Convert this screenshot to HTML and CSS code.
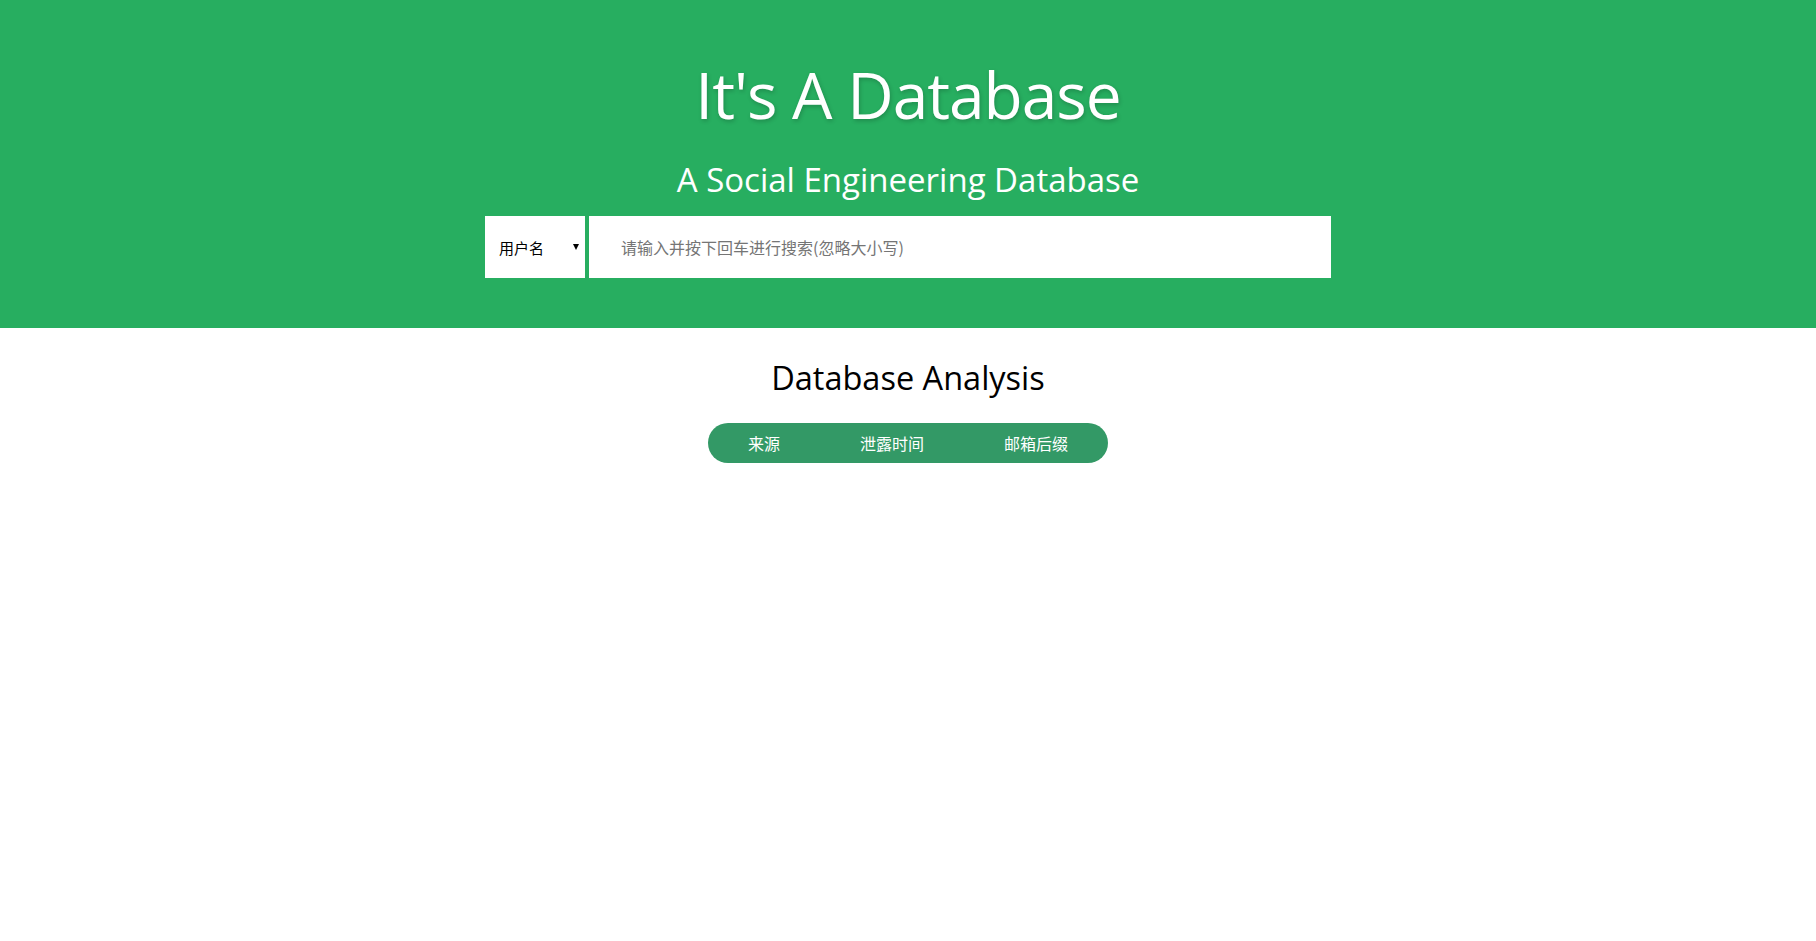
FILE: index.html
```html
<!DOCTYPE html>
<html lang="zh-CN">
<head>
<meta charset="utf-8">
<title>It's A Database</title>
<link rel="stylesheet" href="styles.css">
</head>
<body>
<header class="hero">
  <h1 class="hero-title">It's A Database</h1>
  <h2 class="hero-sub">A Social Engineering Database</h2>
  <form class="search">
    <div class="search-type">
      <span class="search-type-label">用户名</span>
      <span class="search-type-arrow"></span>
    </div>
    <input class="search-input" type="text" placeholder="请输入并按下回车进行搜索(忽略大小写)">
  </form>
</header>
<main class="analysis">
  <h2 class="analysis-title">Database Analysis</h2>
  <ul class="tabs">
    <li class="tab">来源</li>
    <li class="tab">泄露时间</li>
    <li class="tab">邮箱后缀</li>
  </ul>
</main>
</body>
</html>
```

FILE: styles.css
```css
html, body {
  margin: 0;
  padding: 0;
  background: #ffffff;
}
body {
  font-family: "Open Sans", "Noto Sans CJK SC", sans-serif;
}
.hero {
  background: #27ae60;
  height: 328px;
  box-sizing: border-box;
  display: flex;
  flex-direction: column;
  align-items: center;
  padding-top: 53px;
}
.hero-title {
  margin: 0;
  font-weight: 400;
  font-size: 64px;
  letter-spacing: -1px;
  line-height: 84px;
  color: #ffffff;
  text-shadow: 1px 2px 4px rgba(0, 0, 0, 0.2);
}
.hero-sub {
  margin: 18px 0 0;
  font-weight: 400;
  font-size: 33px;
  line-height: 50px;
  color: #ffffff;
}
.search {
  margin-top: 11px;
  display: flex;
  gap: 4px;
  width: 846px;
  height: 62px;
}
.search-type {
  width: 100px;
  background: #ffffff;
  display: flex;
  align-items: center;
  box-sizing: border-box;
  padding: 0 6px 0 14px;
  justify-content: space-between;
}
.search-type-label {
  font-family: "Noto Sans CJK SC", sans-serif;
  font-size: 15px;
  color: #000000;
}
.search-type-arrow {
  width: 0;
  height: 0;
  border-left: 3.5px solid transparent;
  border-right: 3.5px solid transparent;
  border-top: 6px solid #000000;
  margin-top: -1px;
}
.search-input {
  flex: 1;
  border: 0;
  margin: 0;
  outline: none;
  padding: 0 0 0 32px;
  font-family: "Noto Sans CJK SC", sans-serif;
  font-size: 16px;
  color: #333333;
  background: #ffffff;
}
.search-input::placeholder {
  color: #757575;
}
.analysis {
  display: flex;
  flex-direction: column;
  align-items: center;
  padding-top: 25px;
}
.analysis-title {
  margin: 0;
  font-weight: 400;
  font-size: 32.5px;
  line-height: 50px;
  color: #000000;
}
.tabs {
  list-style: none;
  margin: 20px 0 0;
  padding: 0 40px;
  display: flex;
  gap: 80px;
  height: 40px;
  align-items: center;
  background: #339966;
  border-radius: 20px;
}
.tab {
  font-family: "Noto Sans CJK SC", sans-serif;
  font-size: 16px;
  color: #ffffff;
  line-height: 40px;
}
```
